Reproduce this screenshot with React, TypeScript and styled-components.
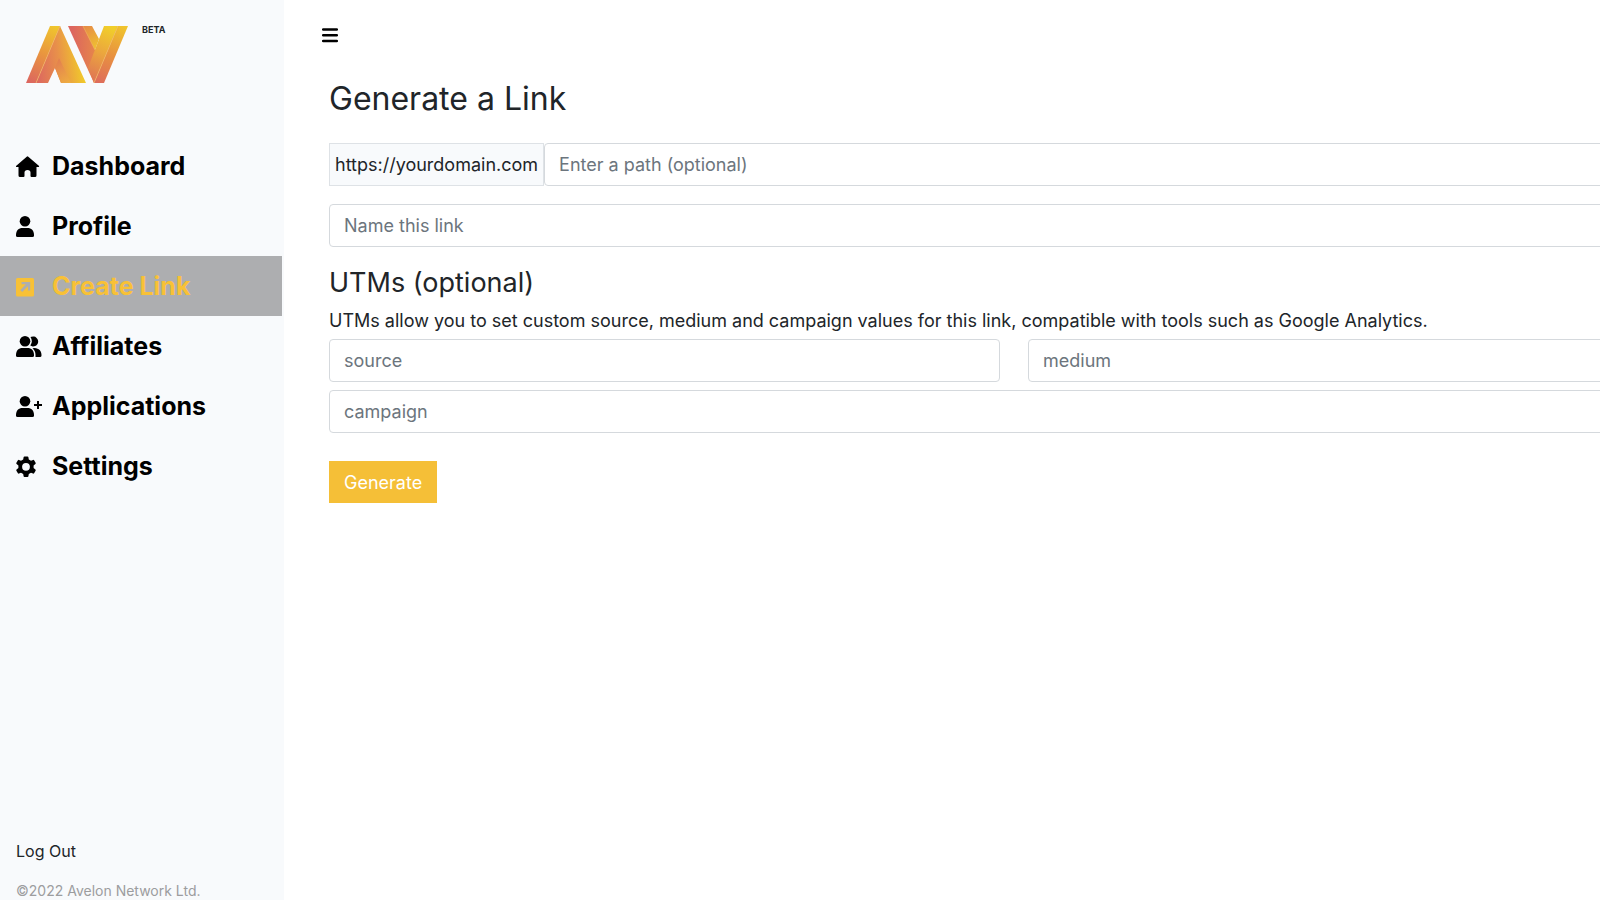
import React from 'react';
import styled, { createGlobalStyle, css } from 'styled-components';

const GlobalStyle = createGlobalStyle`
  *, *::before, *::after { box-sizing: border-box; }
  body {
    margin: 0;
    background: #fff;
    color: #212529;
    font-family: Inter, "Liberation Sans", sans-serif;
    font-size: 18px;
    line-height: 27px;
  }
`;

const Layout = styled.div`
  display: flex;
  min-height: 100vh;
  overflow: hidden;
`;

const Sidebar = styled.aside`
  flex: 0 0 284px;
  display: flex;
  flex-direction: column;
  padding-right: 2px;
  background: #f8fafc;
`;

const Brand = styled.div`
  display: flex;
  align-items: flex-start;
  gap: 14px;
  height: 136px;
  padding: 26px 26px 0;
`;

const Beta = styled.span`
  font-size: 9px;
  line-height: 7px;
  font-weight: 700;
`;

const Nav = styled.nav`
  display: flex;
  flex-direction: column;
`;

const NavLink = styled.a<{ $active?: boolean }>`
  display: flex;
  align-items: center;
  gap: 8px;
  height: 60px;
  padding: 0 16px;
  color: #000;
  font-size: 25px;
  line-height: 40px;
  font-weight: 700;
  text-decoration: none;
  ${(p) => p.$active && css`
    background: #adaeb0;
    color: #f8c136;
  `}
`;

const NavIcon = styled.svg`
  flex: none;
  width: 28px;
  height: 22px;
  margin-top: 2px;
  fill: currentColor;
`;

const SidebarFooter = styled.footer`
  display: flex;
  flex-direction: column;
  gap: 18px;
  margin-top: auto;
  padding-left: 16px;
`;

const LogOut = styled.a`
  color: #212529;
  font-size: 16px;
  line-height: 24px;
  text-decoration: none;
`;

const Copyright = styled.small`
  color: #9c9d9f;
  font-size: 14px;
  line-height: 19px;
`;

const Main = styled.main`
  flex: 1;
  min-width: 0;
  padding: 20px 0 0 37px;
`;

const MenuButton = styled.button`
  display: flex;
  align-items: center;
  justify-content: center;
  width: 16px;
  height: 30px;
  padding: 0;
  border: 0;
  background: none;
  color: #000;
  margin-left: 1px;
`;

/* The form grid runs past the right edge of the window. */
const Form = styled.form`
  margin: 30px -99px 0 8px;
`;

const Title = styled.h1`
  margin: 0 0 25px;
  font-size: 32px;
  line-height: 38px;
  font-weight: 400;
`;

const Subtitle = styled.h2`
  margin: 19px 0 7px;
  font-size: 27px;
  line-height: 34px;
  font-weight: 400;
`;

const Hint = styled.p`
  margin: 0 0 5px;
`;

const fieldText = css`
  font-family: inherit;
  font-size: 18px;
  line-height: 27px;
`;

const Input = styled.input`
  ${fieldText}
  flex: 1;
  display: block;
  width: 100%;
  min-width: 0;
  height: 43px;
  padding: 0 14px;
  border: 1px solid #d5d9dd;
  border-radius: 4px;
  background: #fff;
  color: #212529;
  &::placeholder { color: #6c757d; opacity: 1; }
`;

const InputGroup = styled.div`
  display: flex;
  margin-bottom: 18px;
`;

const Domain = styled.label`
  flex: none;
  height: 43px;
  padding: 7px 5px;
  border: 1px solid #dee2e6;
  background: #f8fafc;
`;

const FieldRow = styled.div`
  display: flex;
  gap: 28px;
  margin-bottom: 8px;
`;

const Submit = styled.button`
  ${fieldText}
  height: 42px;
  margin-top: 28px;
  padding: 0 15px;
  border: 0;
  background: #f5bf37;
  color: #fff;
`;

const Logo = () => (
  <svg width="102" height="57" viewBox="0 0 102 57" role="img" aria-label="Avelon">
    <defs>
      <linearGradient id="strip" gradientUnits="userSpaceOnUse" x1="4" y1="57" x2="32" y2="0">
        <stop offset="0" stopColor="#dc665f" />
        <stop offset="0.5" stopColor="#e9953f" />
        <stop offset="1" stopColor="#f0c82c" />
      </linearGradient>
      <linearGradient id="body" gradientUnits="userSpaceOnUse" x1="10" y1="50" x2="58" y2="44">
        <stop offset="0" stopColor="#dc6660" />
        <stop offset="0.5" stopColor="#e8904a" />
        <stop offset="1" stopColor="#f1cb2a" />
      </linearGradient>
      <linearGradient id="foot" gradientUnits="userSpaceOnUse" x1="30" y1="36" x2="46" y2="57">
        <stop offset="0" stopColor="#e3804f" />
        <stop offset="1" stopColor="#efb040" />
      </linearGradient>
      <linearGradient id="vee" gradientUnits="userSpaceOnUse" x1="46" y1="14" x2="76" y2="14">
        <stop offset="0" stopColor="#dc655f" />
        <stop offset="1" stopColor="#e98f45" />
      </linearGradient>
      <linearGradient id="head" gradientUnits="userSpaceOnUse" x1="58" y1="0" x2="72" y2="22">
        <stop offset="0" stopColor="#e58a48" />
        <stop offset="1" stopColor="#f0c22f" />
      </linearGradient>
      <linearGradient id="arm" gradientUnits="userSpaceOnUse" x1="62" y1="50" x2="86" y2="2">
        <stop offset="0" stopColor="#e07853" />
        <stop offset="0.5" stopColor="#eba63e" />
        <stop offset="1" stopColor="#f1ce2a" />
      </linearGradient>
      <linearGradient id="edge" gradientUnits="userSpaceOnUse" x1="72" y1="57" x2="98" y2="0">
        <stop offset="0" stopColor="#de6c5c" />
        <stop offset="0.5" stopColor="#e8923f" />
        <stop offset="1" stopColor="#f0c52d" />
      </linearGradient>
    </defs>
    <path d="M24 0H34L10 57H0Z" fill="url(#strip)" />
    <path d="M34 0L60 57H35L29 42L22 57H10Z" fill="url(#body)" />
    <path d="M33 32L45 57H35L29 42Z" fill="url(#foot)" />
    <path d="M42 0H58L70 25L68 57Z" fill="url(#vee)" />
    <path d="M57 0H66L73 13L69 24Z" fill="url(#head)" />
    <path d="M78 0H92L68 57L62 42Z" fill="url(#arm)" />
    <path d="M92 0H102L78 57H68Z" fill="url(#edge)" />
    <path d="M34 0L10 57M92 0L68 57M57 0L69 24" fill="none" stroke="#f0b45c" strokeWidth="0.7" />
  </svg>
);

const person = (
  <>
    <circle cx="9" cy="5.3" r="5.3" />
    <path d="M0 19C0 14.6 2.7 12 6.5 12H11.5C15.3 12 18 14.6 18 19V19.5Q18 21 16.5 21H1.5Q0 21 0 19.5Z" />
  </>
);

const icons: Record<string, React.ReactNode> = {
  home: <path d="M10.7 .7Q11.5 0 12.3 .7L22.800 9.800Q23.500 10.500 22.700 11H20.500V19.500Q20.500 21 19 21H15.500Q14.500 21 14.500 20V16.500Q14.500 14 11.500 14T8.500 16.500V20Q8.500 21 7.500 21H4Q2.500 21 2.500 19.500V11H.5Q-.5 10.600 .3 9.800Z" />,
  person,
  link: <path fillRule="evenodd" d="M1.500 2H16.500Q18 2 18 3.500V19Q18 20.500 16.500 20.500H1.500Q0 20.500 0 19V3.500Q0 2 1.500 2ZM5.500 6V8.200H9.800L4.300 14L6.200 15.900L11.900 10.300V14.500H14.200V6Z" />,
  people: (
    <>
      {person}
      <path d="M15.500 .8A5 5 0 1 1 14.300 9.600Q17.300 5.500 14.500 1.100ZM18.500 12C23 12.300 25.500 15 25.500 19V19.500Q25.500 21 24 21H19.500V19C19.500 16 18.500 14 16.500 12.200Z" />
    </>
  ),
  personAdd: (
    <>
      {person}
      <path d="M21 5H23V8H26V10H23V13H21V10H18V8H21Z" />
    </>
  ),
  gear: <path fillRule="evenodd" d="M8.500 .5H11.500Q12.300 .5 12.400 1.300L12.800 3.500L15 4.700L17 3.900Q17.700 3.600 18.100 4.200L19.600 6.800Q20 7.500 19.400 8L17.600 9.500V12L19.400 13.500Q20 14 19.600 14.700L18.100 17.300Q17.700 17.900 17 17.600L15 16.800L12.800 18.100L12.400 20.300Q12.300 21.100 11.500 21.100H8.500Q7.700 21.100 7.600 20.300L7.200 18.100L5 16.800L3 17.600Q2.300 17.900 1.900 17.300L.4 14.700Q0 14 .6 13.500L2.400 12V9.500L.6 8Q0 7.500 .4 6.800L1.900 4.200Q2.300 3.600 3 3.900L5 4.700L7.200 3.500L7.600 1.300Q7.700 .5 8.500 .5ZM10 6.900A3.900 3.900 0 1 0 10 14.700A3.900 3.900 0 1 0 10 6.900Z" />,
};

const items = [
  { label: 'Dashboard', icon: 'home' },
  { label: 'Profile', icon: 'person' },
  { label: 'Create Link', icon: 'link', active: true },
  { label: 'Affiliates', icon: 'people' },
  { label: 'Applications', icon: 'personAdd' },
  { label: 'Settings', icon: 'gear' },
];

export default function App() {
  return (
    <>
      <GlobalStyle />
      <Layout>
        <Sidebar>
          <Brand>
            <Logo />
            <Beta>BETA</Beta>
          </Brand>
          <Nav>
            {items.map((item) => (
              <NavLink key={item.label} href="#" $active={item.active} aria-current={item.active ? 'page' : undefined}>
                <NavIcon viewBox="0 0 28 22" aria-hidden="true">{icons[item.icon]}</NavIcon>
                {item.label}
              </NavLink>
            ))}
          </Nav>
          <SidebarFooter>
            <LogOut href="#">Log Out</LogOut>
            <Copyright>©2022 Avelon Network Ltd.</Copyright>
          </SidebarFooter>
        </Sidebar>
        <Main>
          <MenuButton type="button" aria-label="Toggle menu">
            <svg width="16" height="16" viewBox="0 0 16 16" fill="none" stroke="currentColor" strokeWidth="2.5" strokeLinecap="round">
              <path d="M1.200 2.500H14.800M1.200 8.200H14.800M1.200 14H14.800" />
            </svg>
          </MenuButton>
          <Form onSubmit={(e) => e.preventDefault()}>
            <Title>Generate a Link</Title>
            <InputGroup>
              <Domain htmlFor="path">https://yourdomain.com</Domain>
              <Input id="path" placeholder="Enter a path (optional)" />
            </InputGroup>
            <Input aria-label="Name this link" placeholder="Name this link" />
            <Subtitle>UTMs (optional)</Subtitle>
            <Hint>
              UTMs allow you to set custom source, medium and campaign values for this link, compatible with tools such as Google Analytics.
            </Hint>
            <FieldRow>
              <Input aria-label="source" placeholder="source" />
              <Input aria-label="medium" placeholder="medium" />
            </FieldRow>
            <Input aria-label="campaign" placeholder="campaign" />
            <Submit type="submit">Generate</Submit>
          </Form>
        </Main>
      </Layout>
    </>
  );
}
